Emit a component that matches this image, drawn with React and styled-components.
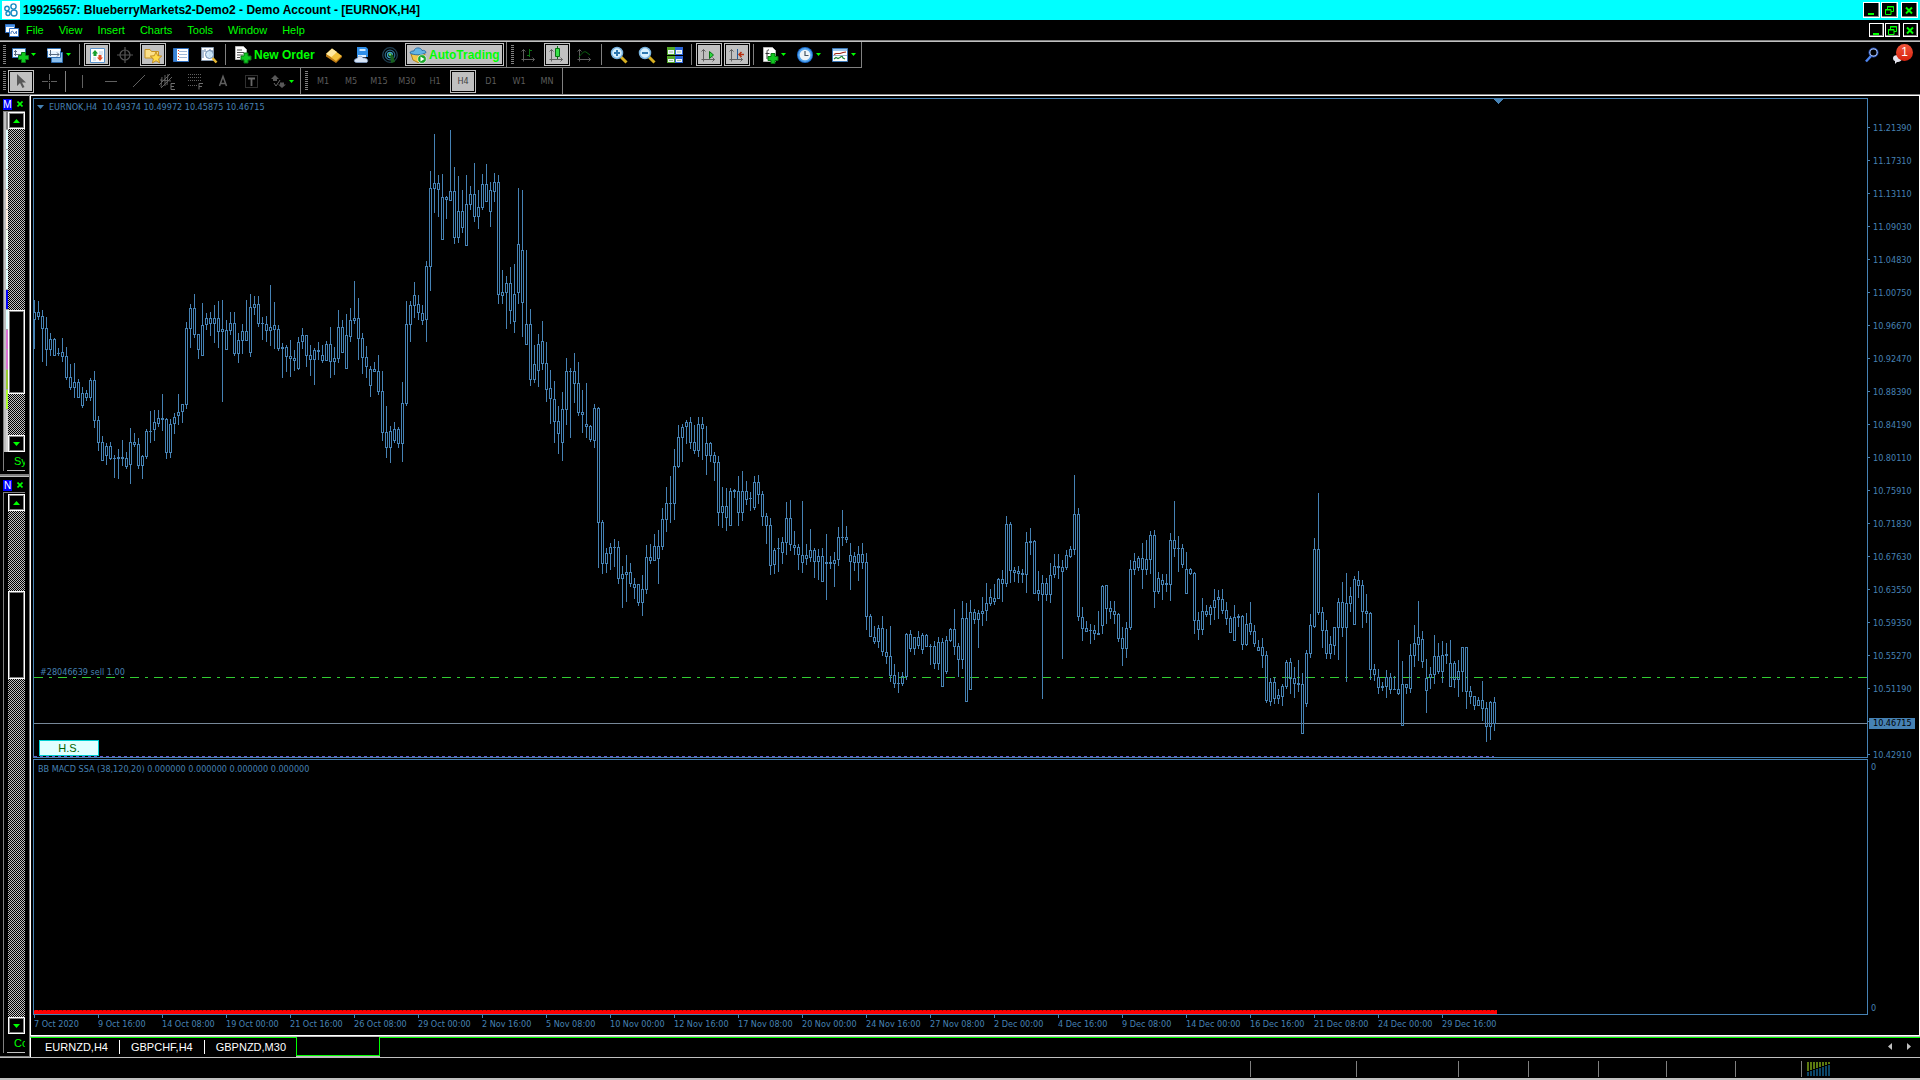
import React from 'react'
import styled, {createGlobalStyle, css} from 'styled-components'

const STEEL = '#4682b4'
const LIME = '#00ff00'
const SILVER = '#c0c0c0'

// high, body top, body bottom, low for every bar, in window rows
const BARS = `
300,312,320,349 301,312,317,320 310,316,329,362 317,328,350,366 333,339,350,356 338,339,356,356
348,353,353,356 338,352,357,362 347,356,378,380 364,377,388,390 363,382,388,398 379,382,398,398
387,393,406,408 390,393,398,401 378,380,398,401 371,380,421,428 416,420,443,451 436,442,461,461
443,446,456,465 442,446,459,460 455,458,458,478 449,457,459,479 440,457,459,466 452,458,467,469
428,442,465,484 433,442,445,447 438,444,466,469 455,456,466,479 429,431,457,459 411,431,431,443
410,422,430,441 410,418,424,427 394,418,420,431 418,419,453,459 419,424,453,458 413,417,424,434
394,412,416,425 404,404,412,423 322,328,405,409 304,308,329,348 294,308,335,338 334,334,350,359
303,325,356,356 313,318,325,330 312,318,324,336 305,318,324,343 301,318,332,348 300,329,332,402
320,330,350,350 312,323,331,335 312,323,354,356 333,340,354,363 324,331,341,354 300,331,341,341
294,307,353,357 296,304,308,315 296,304,324,327 317,323,323,340 316,324,331,342 285,327,331,346
302,325,330,349 325,329,349,351 343,347,349,378 345,347,357,372 340,356,359,377 350,358,361,371
337,342,369,370 328,335,342,349 335,335,356,367 345,355,360,376 348,350,360,385 342,350,352,360
345,355,361,363 341,344,361,361 327,344,362,378 347,358,362,375 310,327,359,363 320,327,353,353
314,335,369,369 308,320,337,342 281,318,321,324 298,318,339,360 333,338,358,374 346,357,367,378
366,369,386,397 362,369,372,372 355,371,392,395 371,391,433,441 406,432,448,458 426,431,448,463
422,429,441,443 427,429,444,448 382,403,444,462 301,324,404,406 301,305,325,342 282,295,306,318
295,304,313,320 305,313,321,325 261,266,320,342 171,188,267,291 134,183,189,213 175,183,190,217
174,197,240,240 196,197,200,219 130,191,201,201 167,191,238,244 176,211,238,243 190,211,228,233
175,204,246,246 186,194,205,210 163,194,217,222 190,207,217,229 174,184,208,210 164,184,202,202
182,190,212,227 173,182,192,202 175,182,295,304 270,292,296,304 276,283,293,329 267,283,311,324
264,294,322,333 188,244,293,304 190,250,303,337 250,324,345,345 309,324,380,386 345,364,380,383
334,344,371,387 321,341,364,370 342,363,390,402 370,388,399,424 381,399,422,443 406,421,434,454
392,409,443,461 358,371,410,425 368,371,371,438 353,371,384,403 362,383,413,416 390,412,415,433
383,424,427,438 425,426,440,442 404,408,441,448 407,408,523,568 520,522,564,574 548,553,564,573
543,547,554,570 539,547,547,567 541,547,579,584 566,574,579,608 555,572,575,602 563,572,584,587
578,584,588,599 584,584,603,606 575,589,603,616 545,557,590,594 544,557,561,564 534,546,561,561
530,546,559,584 508,519,547,550 487,503,520,532 476,503,503,523 449,466,504,520 425,437,467,468
424,427,438,462 420,422,427,444 417,422,443,449 425,442,451,454 417,424,451,457 417,424,429,460
426,443,456,475 442,443,456,462 452,455,463,481 456,462,513,526 487,506,513,528 488,506,518,531
488,491,526,526 489,490,492,498 476,491,513,526 471,491,513,521 481,491,500,505 492,498,498,511
476,482,508,510 475,482,495,504 491,494,517,526 513,516,526,544 518,525,566,575 548,550,565,574
538,548,548,572 537,542,553,564 502,518,543,555 500,518,545,551 531,545,548,555 544,547,555,570
501,555,563,573 544,555,559,565 529,550,558,562 548,550,562,578 549,556,562,580 548,556,582,582
534,562,564,600 556,562,564,569 552,560,564,587 527,537,560,566 510,537,537,546 526,537,540,543
543,555,562,590 552,556,563,571 546,554,563,581 543,554,563,569 553,562,617,630 614,616,637,637
626,637,642,644 625,628,642,648 616,628,652,656 629,652,657,664 626,656,676,682 664,675,684,688
672,683,683,693 672,676,684,686 633,634,677,680 630,634,649,652 637,637,649,655 631,637,646,649
633,635,650,654 634,635,647,647 644,646,646,665 641,646,664,669 637,642,664,670 638,642,687,687
636,640,672,674 628,629,641,642 609,629,647,655 643,646,660,677 601,618,660,669 603,618,702,702
600,612,690,690 609,612,620,624 610,613,620,648 597,611,614,626 583,603,611,621 589,597,604,606
584,598,602,605 578,579,599,599 570,579,584,602 516,524,584,587 522,524,571,583 567,570,573,582
566,571,574,583 569,573,575,583 532,542,575,593 528,541,543,555 540,541,594,594 571,590,594,601
575,583,595,699 578,583,595,601 563,575,595,603 554,566,575,578 554,566,568,579 560,567,572,659
550,555,568,570 546,549,557,558 475,514,550,555 508,514,617,621 607,617,629,641 621,628,632,632
624,630,630,644 625,630,634,640 611,633,635,635 585,586,626,634 585,585,609,624 601,608,612,619
601,611,615,624 613,614,639,642 627,638,649,666 622,628,649,658 560,569,628,630 553,561,570,575
556,558,568,571 543,558,570,589 540,559,570,575 531,535,560,574 530,535,592,608 572,578,592,594
574,580,585,600 574,583,585,592 533,540,585,601 501,540,549,557 536,548,548,572 544,548,565,568
552,569,594,594 568,569,574,575 572,573,621,634 612,620,630,640 598,611,630,635 605,611,615,617
605,607,615,625 589,600,608,620 590,597,600,619 589,599,611,614 602,610,619,625 616,618,633,633
605,617,641,641 614,616,618,627 615,616,645,650 613,624,645,646 602,623,632,635 625,631,644,647
640,647,651,651 638,647,656,668 651,655,701,703 678,682,702,706 677,682,699,704 689,695,699,704
684,686,697,706 660,662,687,689 658,662,679,694 667,678,684,698 660,683,685,692 673,684,734,734
650,653,704,707 614,625,654,658 538,549,627,628 493,549,613,615 607,612,631,648 620,630,654,659
636,644,654,659 627,627,646,655 598,602,628,660 582,602,628,637 573,603,628,682 587,596,604,612
576,579,625,625 571,580,586,598 580,585,612,628 594,611,614,623 612,613,670,680 664,669,675,681
669,677,688,694 682,686,688,691 670,677,687,698 673,677,690,694 676,689,689,690 640,689,694,695
661,684,726,726 684,684,688,694 644,655,689,693 625,643,656,667 601,637,645,661 631,639,662,668
659,678,691,713 667,674,678,689 635,656,675,684 643,656,672,674 641,655,672,683 643,654,656,664
640,663,687,687 661,663,680,688 660,671,680,697 647,647,672,692 647,647,692,709 686,691,697,704
696,696,706,710 697,700,706,706 681,700,709,721 702,708,727,742 701,702,727,740 697,702,724,731
`.trim().split(/\s+/).map(bar => bar.split(',').map(Number))

const PLOT_TOP = 99

const candlePath = BARS.map((bar, i) => {
  const [high, top, bottom, low] = bar.map(v => v - PLOT_TOP)
  const x = i * 4
  const height = bottom - 1 - top
  const body = height > 0
    ? `M${x - 0.5} ${top + 0.5}h2v${height}h-2z`
    : `M${x - 1} ${top + 0.5}h3`
  return `M${x + 0.5} ${high}V${top}M${x + 0.5} ${bottom}V${low}${body}`
}).join('')

const PRICES = [
  '11.21390', '11.17310', '11.13110', '11.09030', '11.04830', '11.00750', '10.96670',
  '10.92470', '10.88390', '10.84190', '10.80110', '10.75910', '10.71830', '10.67630',
  '10.63550', '10.59350', '10.55270', '10.51190', '', '10.42910'
]

const DATES = [
  '7 Oct 2020', '9 Oct 16:00', '14 Oct 08:00', '19 Oct 00:00', '21 Oct 16:00', '26 Oct 08:00',
  '29 Oct 00:00', '2 Nov 16:00', '5 Nov 08:00', '10 Nov 00:00', '12 Nov 16:00', '17 Nov 08:00',
  '20 Nov 00:00', '24 Nov 16:00', '27 Nov 08:00', '2 Dec 00:00', '4 Dec 16:00', '9 Dec 08:00',
  '14 Dec 00:00', '16 Dec 16:00', '21 Dec 08:00', '24 Dec 00:00', '29 Dec 16:00'
]

const GlobalStyle = createGlobalStyle`
  * {
    box-sizing: border-box;
  }
  body {
    margin: 0;
    background: #000;
    overflow: hidden;
    font-family: 'Liberation Sans', sans-serif;
    font-size: 11px;
  }
  button {
    margin: 0;
    padding: 0;
    border: 0;
    background: none;
    color: inherit;
    font: inherit;
  }
  svg {
    display: block;
    flex: none;
  }
`

const Terminal = styled.div`
  display: flex;
  flex-direction: column;
  height: 100vh;
`

const TitleBar = styled.header`
  display: flex;
  align-items: center;
  gap: 3px;
  height: 20px;
  padding: 0 2px 0 2px;
  background: #00ffff;
  color: #000;
`

const Title = styled.h1`
  flex: 1;
  margin: 0;
  font: bold 12px/20px 'Liberation Sans', sans-serif;
  white-space: nowrap;
`

const WindowButtons = styled.div`
  display: flex;
  gap: 1px;

  button:last-child {
    margin-left: 2px;
  }
`

const WindowButton = styled.button`
  display: flex;
  align-items: center;
  justify-content: center;
  width: ${p => p.$small ? 15 : 17}px;
  height: ${p => p.$small ? 14 : 16}px;
  border: 1px solid #fff;
  background: #000;
  box-shadow: inset -1px -1px 0 #808080;
`

const MenuBar = styled.nav`
  display: flex;
  align-items: center;
  height: 20px;
  padding: 0 2px 0 5px;
  color: ${LIME};
`

const Menu = styled.div`
  display: flex;
  flex: 1;
  gap: 15px;
  padding-left: 7px;
`

const Toolbars = styled.div`
  border-top: 1px solid #808080;
  box-shadow: inset 0 1px 0 ${SILVER};
`

const ToolRow = styled.div`
  display: flex;
  height: ${p => p.$last ? 26 : 27}px;
  padding-top: ${p => p.$last ? 0 : 1}px;
`

const ToolGroup = styled.div`
  display: flex;
  align-items: center;
  gap: 2px;
  padding-left: ${p => p.$first ? 3 : 4}px;
  padding-right: ${p => p.$end || 0}px;
  border-right: 1px solid #808080;
  border-bottom: ${p => p.$flat ? 0 : 1}px solid #808080;
`

const Grip = styled.span`
  width: 3px;
  height: 20px;
  background: repeating-linear-gradient(#808080 0 1px, #000 1px 2px);
`

const Divider = styled.span`
  width: 1px;
  height: 21px;
  margin: 0 2px 0 1px;
  background: #808080;
`

const pressed = css`
  border: 1px solid ${SILVER};
  background: ${SILVER};
  box-shadow: inset 0 0 0 1px #000;
`

const ToolButton = styled.button`
  display: flex;
  align-items: center;
  justify-content: center;
  width: 26px;
  height: 23px;
  ${p => p.$on && pressed}
`

const DropButton = styled.button`
  display: flex;
  align-items: center;
  gap: 1px;
  width: 33px;
  height: 23px;
  padding-left: 3px;
`

const LabelButton = styled.button`
  display: flex;
  align-items: center;
  gap: 2px;
  width: ${p => p.$on ? 99 : 89}px;
  height: 23px;
  padding-left: ${p => p.$on ? 3 : 4}px;
  color: ${LIME};
  font-weight: bold;
  font-size: 12px;
  white-space: nowrap;
  ${p => p.$on && pressed}
`

const PeriodButton = styled(ToolButton)`
  color: ${p => p.$on ? '#404040' : '#5c5c5c'};
  font-family: 'DejaVu Sans Condensed', 'DejaVu Sans', sans-serif;
  font-size: 9px;
`

const Spacer = styled.div`
  flex: 1;
`

const Alerts = styled.div`
  display: flex;
  align-items: center;
  gap: 10px;
  padding-right: 7px;
`

const AlertButton = styled.button`
  position: relative;
  width: 22px;
  height: 18px;
`

const Badge = styled.span`
  position: absolute;
  top: -2px;
  right: 0;
  width: 17px;
  height: 17px;
  border-radius: 9px;
  background: linear-gradient(#f0563c, #d8210c);
  color: #fff;
  font-size: 12px;
  line-height: 16px;
`

const Workspace = styled.main`
  display: flex;
  flex: 1;
  min-height: 0;
`

const Sidebar = styled.aside`
  display: flex;
  flex-direction: column;
  width: 29px;
`

const Panel = styled.section`
  display: flex;
  flex-direction: column;
  height: ${p => p.$height ? p.$height + 'px' : 'auto'};
  flex: ${p => p.$height ? 'none' : 1};
  padding: 2px 4px 3px 3px;
  border-top: 1px solid #808080;
  border-bottom: 1px solid #808080;
  box-shadow: inset 0 1px 0 ${SILVER};
`

const PanelHeader = styled.div`
  display: flex;
  align-items: center;
  gap: 5px;
  height: 14px;
`

const PanelTitle = styled.span`
  width: 9px;
  height: 11px;
  background: #0000ff;
  color: #fff;
  font-size: 10px;
  line-height: 11px;
  text-align: center;
`

const PanelBody = styled.div`
  display: flex;
  flex: 1;
  flex-direction: column;
  min-height: 0;
  border-top: 1px solid #808080;
  border-left: 1px solid #808080;
`

const PanelContent = styled.div`
  display: flex;
  flex: 1;
  min-height: 0;
  padding-top: ${p => p.$inset || 0}px;
`

const Symbols = styled.div`
  display: flex;
  flex-direction: column;
  width: 4px;
  border-left: ${p => p.$list ? 2 : 0}px solid ${SILVER};
  background: ${p => p.$list ? '#d3d3d3' : '#000'};
`

const SymbolRow = styled.span`
  height: 20px;
  border-bottom: 1px solid #a8a8a8;
  background: ${p => p.$color};

  &:first-child {
    height: 18px;
  }
`

const ScrollBar = styled.div`
  display: flex;
  flex: 1;
  flex-direction: column;
  background: repeating-conic-gradient(${SILVER} 0 25%, #000 0 50%) 0 0 / 2px 2px;
`

const ScrollButton = styled.button`
  display: flex;
  align-items: center;
  justify-content: center;
  height: 17px;
  border: 1px solid #fff;
  background: #000;
  box-shadow: inset 0 0 0 1px #808080;
`

const ScrollSpace = styled.span`
  flex: ${p => p.$grow} 1 0;
`

const ScrollThumb = styled.span`
  flex: ${p => p.$grow} 1 0;
  border: 1px solid #fff;
  background: #000;
  box-shadow: inset 0 0 0 1px #808080;
`

const PanelTab = styled.button`
  width: 18px;
  height: 19px;
  margin-left: 3px;
  padding-left: 7px;
  overflow: hidden;
  border-bottom: 1px solid ${SILVER};
  color: ${LIME};
  font-size: 11px;
  line-height: 18px;
  text-align: left;
  white-space: nowrap;
`

const Mdi = styled.div`
  display: flex;
  flex: 1;
  flex-direction: column;
  min-width: 0;
  border-left: 1px solid #808080;
  border-top: 1px solid #808080;
`

const Chart = styled.div`
  display: grid;
  flex: 1;
  grid-template-columns: minmax(0, 1fr) 51px;
  grid-template-rows: 660fr 1px 256fr 20px;
  min-height: 0;
  padding: 2px 0 0 2px;
  border: 1px solid #fff;
  color: ${STEEL};
  font-family: 'DejaVu Sans Condensed', 'DejaVu Sans', sans-serif;
  font-size: 9px;
`

const Pane = styled.div`
  position: relative;
  grid-column: 1;
  grid-row: ${p => p.$row};
  min-height: 0;
  overflow: hidden;
  border: 1px solid ${STEEL};
`

const Plot = styled.svg`
  width: 100%;
  height: 100%;
`

const PaneLabel = styled.div`
  position: absolute;
  top: ${p => p.$top}px;
  left: ${p => p.$left}px;
  display: flex;
  align-items: center;
  gap: 5px;
  line-height: 12px;
  white-space: pre;
`

const ScriptButton = styled.button`
  position: absolute;
  left: 5px;
  bottom: 1px;
  width: 60px;
  height: 16px;
  border: 1px solid #00ced1;
  background: #e0ffff;
  color: #006400;
  font: 11px/14px 'Liberation Sans', sans-serif;
`

const PriceAxis = styled.div`
  position: relative;
  grid-column: 2;
  grid-row: 1;
  display: flex;
  flex-direction: column;
  padding-top: 13px;
  overflow: hidden;
`

const Price = styled.span`
  display: flex;
  align-items: center;
  gap: 3px;
  height: 33px;
  flex: none;

  &::before {
    content: '';
    width: 2px;
    height: 1px;
    background: ${STEEL};
  }
`

const LastPrice = styled.span`
  position: absolute;
  top: 620px;
  left: 1px;
  width: 46px;
  height: 11px;
  padding-left: 4px;
  background: ${STEEL};
  color: #000;
  line-height: 11px;
`

const SubAxis = styled.div`
  grid-column: 2;
  grid-row: 3;
  display: flex;
  flex-direction: column;
  justify-content: space-between;
  padding: 3px 3px 1px;
  line-height: 11px;
`

const DateAxis = styled.div`
  display: flex;
  grid-column: 1 / 3;
  grid-row: 4;
  padding-left: 1px;
`

const DateMark = styled.span`
  width: 64px;
  flex: none;
  line-height: 13px;
  white-space: nowrap;

  &::before {
    content: '';
    display: block;
    width: 1px;
    height: 3px;
    background: ${STEEL};
  }
`

const ChartTabs = styled.div`
  display: flex;
  height: 21px;
  border-top: 1px solid ${SILVER};
  color: #fff;
`

const TabList = styled.div`
  display: flex;
  align-items: center;
  gap: 11px;
  padding: 0 10px 2px 14px;
  border-top: 1px solid ${LIME};
  border-left: 1px solid #fff;
`

const Tab = styled.button`
  height: 16px;
  white-space: nowrap;
`

const TabLine = styled.span`
  width: 1px;
  height: 14px;
  background: #fff;
`

const ActiveTab = styled.button`
  width: 84px;
  height: 19px;
  border: 1px solid ${LIME};
  border-top: 0;
  box-shadow: 0 1px 0 ${SILVER};
`

const TabRest = styled.div`
  display: flex;
  flex: 1;
  align-items: center;
  justify-content: flex-end;
  gap: 15px;
  padding: 0 9px 2px 0;
  border-top: 1px solid ${LIME};
`

const StatusBar = styled.footer`
  display: grid;
  grid-template-columns: 1fr 106px 102px 70px 70px 68px 69px 66px 119px;
  height: 23px;
  padding: 3px 0 1px;
  border-top: 1px solid ${SILVER};
  border-bottom: 2px solid ${SILVER};
`

const StatusCell = styled.div`
  display: flex;
  align-items: center;
  padding-left: 5px;
  border-left: ${p => p.$first ? 0 : 1}px solid #808080;
`

const Icon = ({children, size = 18}) => (
  <svg width={size} height={size} viewBox={`0 0 ${size} ${size}`} aria-hidden="true">{children}</svg>
)

const DropCaret = styled.svg`
  margin-left: 1px;
`

const Caret = () => (
  <DropCaret width="5" height="3" viewBox="0 0 5 3" aria-hidden="true"><path d="M0 0h5L2.500 3z" fill={LIME}/></DropCaret>
)

const Arrow = ({down}) => (
  <svg width="7" height="4" viewBox="0 0 7 4" aria-hidden="true"><path d={down ? 'M0 0h7L3.5 4z' : 'M0 4h7L3.5 0z'} fill={LIME}/></svg>
)

const Plus = ({x, y}) => (
  <path d={`M${x + 3} ${y}h4v3h3v4h-3v3h-4v-3h-3v-4h3z`} fill="#10c820" stroke="#067a10" strokeWidth="1"/>
)

const axes = 'M3.5 3.5v12M1.5 13.5h13M1.5 5.5l2-2 2 2M12.5 11.5l2 2-2 2'

const icons = {
  app: <Icon>
    <path d="M0 0h18v18H0z" fill="#fff"/>
    <g fill="none" stroke="#178cc4" strokeWidth="1.4"><circle cx="11.500" cy="5.500" r="2.600"/><circle cx="5" cy="7.500" r="2.200"/><circle cx="12" cy="12" r="3"/><circle cx="6" cy="12.500" r="2"/></g>
  </Icon>,
  newChart: <Icon>
    <path d="M1.500 2.500h13v9h-13z" fill="#e9f5ff" stroke="#2e6db0"/><path d="M4.500 4v6M3 8.500h9M3 5.500h3" stroke="#5a6b80" fill="none"/><Plus x={7.5} y={6.5}/>
  </Icon>,
  profiles: <Icon>
    <path d="M5.500 6.500h11v10h-11z" fill="#8cc0ee" stroke="#2e6db0"/><path d="M1.500 2.500h13v9h-13z" fill="#e9f5ff" stroke="#2e6db0"/><path d="M1.500 3h13v2h-13z" fill="#fff"/><path d="M4.500 4v6M3 8.500h10M11 6.500l2 2-2 2" stroke="#5a6b80" fill="none"/>
  </Icon>,
  market: <Icon>
    <path d="M2.500 2.500h14v14h-14z" fill="#fff" stroke="#5a93cc"/><path d="M11 6h4M11 8h4M5 12h3M5 14h3" stroke="#b4cce4"/><path d="M7 4l3 3.500H8.500V10h-3V7.500H4z" fill="#18a030"/><path d="M12 15l-3-3.500h1.500V9h3v2.500H15z" fill="#e2502a"/>
  </Icon>,
  target: <Icon>
    <g fill="none" stroke="#555" strokeWidth="1.2"><circle cx="9" cy="9" r="5"/><path d="M9 1v16M1 9h16"/></g>
  </Icon>,
  navigator: <Icon>
    <path d="M1 3.500h5l1.500 2h7V12H1z" fill="#fbe08a" stroke="#c79320"/><path d="M12 6l1.700 3.700 4 .4-3 2.700.9 4.100-3.600-2.100-3.600 2.100.9-4.100-3-2.700 4-.4z" fill="#ffdb4a" stroke="#b67c12" strokeWidth=".8"/>
  </Icon>,
  terminal: <Icon>
    <path d="M1.500 2.500h15v13h-15z" fill="#fff" stroke="#2f6fc0"/><path d="M2 3h3v12H2z" fill="#3b85d8"/><path d="M7 5.500h8M7 8.500h8M7 11.500h8" stroke="#9fb8d8"/><path d="M6.500 4v10" stroke="#e04030" strokeDasharray="1 2"/>
  </Icon>,
  tester: <Icon>
    <path d="M1.500 1.500h12v13h-12z" fill="#fff" stroke="#8798ac"/><path d="M3 4v8M5 3v3M10 3v8M12 4v5" stroke="#5b7ea8"/><circle cx="9.500" cy="8.500" r="4" fill="#cbe6f8" fillOpacity=".85" stroke="#6d8cb0"/><path d="M12.500 12l4 4.500" stroke="#e8b830" strokeWidth="2.500"/>
  </Icon>,
  order: <Icon>
    <path d="M1.500 .5h8l3 3v10h-11z" fill="#fff" stroke="#b8b8b8"/><path d="M3 4h5M3 6.500h7M3 9h6M3 11.500h3" stroke="#555"/><Plus x={7} y={7}/>
  </Icon>,
  editor: <Icon>
    <path d="M1 8l6-5.500L17 10l-6 6z" fill="#f4c23c"/><path d="M1 8l6-5.500L12 6 6.500 11z" fill="#ffe9a0"/><path d="M1 8v2.500L11 17l6-6V9.500L11 15z" fill="#c07c14"/>
  </Icon>,
  vps: <Icon>
    <path d="M4 1h9l2 2v8H4z" fill="#2f8ee8"/><path d="M6.500 3h6v2h-6z" fill="#cfeaff"/><path d="M5 9h8v2H5z" fill="#e4f2ff"/><path d="M4 16.500c-4 0-3-4 0-4 1-3 5-3 6-.5 5-1 6 4.500 3 4.500z" fill="#d8e6f8" stroke="#7e9cc8" strokeWidth=".8"/>
  </Icon>,
  signals: <Icon>
    <g fill="none" strokeWidth="1.3"><circle cx="9" cy="9" r="7.300" stroke="#1e3d50"/><circle cx="9" cy="9" r="4.800" stroke="#2a6584"/><circle cx="9" cy="9" r="2.500" stroke="#3aa0c0"/></g><path d="M9 8l3 1 2 7-4 1z" fill="#17601e"/><circle cx="9" cy="8.500" r="1.300" fill="#68d060"/>
  </Icon>,
  auto: <Icon>
    <path d="M2 8l2 6 5 2.500 5-2.500 2-6z" fill="#f2c84a" stroke="#b28418"/><path d="M1 7c0-2 3-2 4-2 .5-4 7-4 8-.5 2-.5 4 .5 4 2-4 3-12 3-16 .5z" fill="#62b4e4" stroke="#2c6fa8"/><circle cx="13" cy="13" r="4.300" fill="#18a828" stroke="#fff" strokeWidth=".6"/><path d="M11.500 10.500l4 2.500-4 2.500z" fill="#fff"/>
  </Icon>,
  bars: <Icon>
    <path d={axes} fill="none" stroke="#5e5e5e"/><path d="M9.500 3v8M7 9.500h2M10 4.500h2" stroke="#0c7414"/>
  </Icon>,
  candles: <Icon>
    <path d={axes} fill="none" stroke="#606060"/><path d="M9.500 0v13" stroke="#087014"/><path d="M7.500 2.500h4v8h-4z" fill="#38e048" stroke="#087014"/>
  </Icon>,
  line: <Icon>
    <path d={axes} fill="none" stroke="#5e5e5e"/><path d="M3 11c3-4 5-6 7-5l4 3" fill="none" stroke="#0c6412"/>
  </Icon>,
  zoomIn: <Icon>
    <path d="M11 11l5.500 5.500" stroke="#d8b020" strokeWidth="3"/><circle cx="7" cy="7" r="5.500" fill="#d6f0ff" stroke="#78b4e0" strokeWidth="1.500"/><path d="M4 7h6M7 4v6" stroke="#2e78b0" strokeWidth="2"/>
  </Icon>,
  zoomOut: <Icon>
    <path d="M11 11l5.500 5.500" stroke="#d8b020" strokeWidth="3"/><circle cx="7" cy="7" r="5.500" fill="#d6f0ff" stroke="#78b4e0" strokeWidth="1.500"/><path d="M4 7h6" stroke="#2e78b0" strokeWidth="2"/>
  </Icon>,
  tile: <Icon>
    <path d="M1 1h8v8H1zM10 10h7v7h-7z" fill="#52a828"/><path d="M9 1h8v8H9z" fill="#2c66d8"/><path d="M1 10h8v7H1z" fill="#52a828"/><path d="M9 10h8v7H9z" fill="#2c66d8"/><path d="M2 4h6v4H2zM10 4h6v4h-6zM2 13h6v3H2zM10 13h6v3h-6z" fill="#eef6ff"/><path d="M3 6h4M11 6h4M3 14.500h4M11 14.500h4" stroke="#9cbc9c"/>
  </Icon>,
  scroll: <Icon>
    <path d={axes} fill="none" stroke="#606060"/><path d="M9.500 5.500l4 3.500-4 3.500z" fill="#30d840" stroke="#087014"/>
  </Icon>,
  shift: <Icon>
    <path d={axes} fill="none" stroke="#606060"/><path d="M9.500 3v10" stroke="#205c98"/><path d="M16 8.500h-5M13.500 6l-2.500 2.500 2.500 2.500" fill="none" stroke="#b83010" strokeWidth="1.500"/>
  </Icon>,
  indicators: <Icon>
    <path d="M2.500 1.500h9l3 3v11h-12z" fill="#fff" stroke="#b8b8b8"/><path d="M8 4c-2-.5-2 1-2 3v6M4.500 7.500h4" fill="none" stroke="#333"/><Plus x={7} y={7.5}/>
  </Icon>,
  clock: <Icon>
    <circle cx="9" cy="9" r="8" fill="#1c6ed0"/><circle cx="9" cy="9" r="7" fill="#58a8f0"/><circle cx="9" cy="9" r="5.300" fill="#eef4f8"/><path d="M9 5v4.500h3.500" fill="none" stroke="#4a5866" strokeWidth="1.200"/>
  </Icon>,
  templates: <Icon>
    <path d="M1.500 2.500h15v13h-15z" fill="#fff" stroke="#3c78b8"/><path d="M2 3h14v2H2z" fill="#9cc8f0"/><path d="M3 8.500l2-1h4l3-1 3-.5" fill="none" stroke="#a02818" strokeWidth="1.200"/><path d="M3 13l2-1.500 2 1 2-1 2-1.500 1 2 2 1" fill="none" stroke="#208838" strokeWidth="1.200"/><path d="M2 9.500h14" stroke="#9cb4cc"/>
  </Icon>,
  cursor: <Icon><path d="M5 2v12l3-3 2.500 5 2-1-2.500-4.500h4z" fill="#585858"/></Icon>,
  cross: <Icon><path d="M9.500 2v6M9.500 11v6M2 9.500h6M11 9.500h6M9 9.500h1" stroke="#606060"/></Icon>,
  vline: <Icon><path d="M8.500 3v13" stroke="#606060"/></Icon>,
  hline: <Icon><path d="M3 9.500h12" stroke="#606060"/></Icon>,
  trend: <Icon><path d="M3 15L15 3" stroke="#606060"/></Icon>,
  channel: <Icon>
    <path d="M1 13L12 2M3 16L14 5M2 8l11 1M4 5l-1 10M7 3v11M10 2L9 13" stroke="#606060" fill="none"/><path d="M17 11.500h-4v6h4M13 14.500h3" stroke="#707070" fill="none"/>
  </Icon>,
  fibo: <Icon>
    <path d="M2 2.500h14M2 5.500h14M2 8.500h14M2 13.500h9" stroke="#606060" strokeDasharray="1 1"/><path d="M17 11.500h-4v6M13 14.500h3" stroke="#707070" fill="none"/>
  </Icon>,
  text: <Icon><path d="M5.500 14L9 4.500l3.500 9.500M6.500 11.500h5" fill="none" stroke="#606060" strokeWidth="1.500"/></Icon>,
  label: <Icon>
    <path d="M3.500 3.500h12v12h-12z" fill="none" stroke="#606060" strokeDasharray="1 1"/><path d="M6 6.500h7M9.500 6v8" stroke="#686868" strokeWidth="1.800"/>
  </Icon>,
  arrows: <Icon>
    <path d="M6 3l4 4H8v2H4V7H2zM13 16l-4-3.500h2V10.500h4v2h2z" fill="#585858"/><path d="M5 11l2 3 4-6" fill="none" stroke="#686868"/>
  </Icon>,
  search: <Icon>
    <path d="M3 15.500L8 10" stroke="#4c84f0" strokeWidth="2.500"/><circle cx="10.500" cy="6.500" r="3.800" fill="#000" stroke="#a0bcf8" strokeWidth="1.500"/><circle cx="10.500" cy="6.500" r="4.600" fill="none" stroke="#2450c0" strokeWidth=".8"/>
  </Icon>,
  mdi: <Icon size={14}>
    <path d="M.5 1.500h9v8h-9z" fill="#fff" stroke="#2f6fc0"/><path d="M1 2h9v2H1z" fill="#4c94e8"/><path d="M4.500 5.500h9v8h-9z" fill="#fff" stroke="#2f6fc0"/><path d="M6 11V9l1.500-1 2 3 2-3v3" fill="none" stroke="#5080c0"/>
  </Icon>
}

const glyphs = {
  Minimize: <path d="M2 8h6v2H2z" fill={LIME}/>,
  Restore: <path d="M3.500 4V1.500h6v5H7M3 2h7M1.500 4.500h5.500v5H1.500zM1 5h6" fill="none" stroke={LIME}/>,
  Close: <path d="M2 2.500l6 6M8 2.500l-6 6" stroke={LIME} strokeWidth="2"/>
}

const Controls = ({small, target}) => (
  <WindowButtons>
    {Object.keys(glyphs).map(name => (
      <WindowButton key={name} $small={small} aria-label={`${name} ${target}`}>
        <Icon size={11}>{glyphs[name]}</Icon>
      </WindowButton>
    ))}
  </WindowButtons>
)

const Tool = ({icon, on}) => (
  <ToolButton $on={on} aria-pressed={!!on} aria-label={icon}>{icons[icon]}</ToolButton>
)

const Drop = ({icon}) => (
  <DropButton aria-label={icon}>{icons[icon]}<Caret/></DropButton>
)

const SidePanel = ({letter, name, tab, height, inset, before, thumb, after, rows}) => (
  <Panel $height={height} aria-label={name}>
    <PanelHeader>
      <PanelTitle>{letter}</PanelTitle>
      <button aria-label={`Close ${name}`}>
        <svg width="6" height="6" viewBox="0 0 6 6"><path d="M.5 .5l5 5M5.500 .5l-5 5" stroke={LIME} strokeWidth="1.600"/></svg>
      </button>
    </PanelHeader>
    <PanelBody>
      <PanelContent $inset={inset}>
        <Symbols $list={!!rows}>
          {rows && rows.map((color, i) => <SymbolRow key={i} $color={color}/>)}
        </Symbols>
        <ScrollBar>
          <ScrollButton aria-label={`Scroll ${name} up`}><Arrow/></ScrollButton>
          <ScrollSpace $grow={before}/>
          <ScrollThumb $grow={thumb}/>
          <ScrollSpace $grow={after}/>
          <ScrollButton aria-label={`Scroll ${name} down`}><Arrow down/></ScrollButton>
        </ScrollBar>
      </PanelContent>
      <PanelTab>{tab}</PanelTab>
    </PanelBody>
  </Panel>
)

const WATCH_ROWS = [
  '#808080', '#e0ffff', '#e0ffff', '#e0ffff', '#ffefe0', '#ffefe0', '#f0fff0', '#e0ffff', '#e0ffff',
  '#0000ff', '#e0ffff', '#da70d6', '#da70d6', '#9acd32', '#adff2f'
]

const PERIODS = ['M1', 'M5', 'M15', 'M30', 'H1', 'H4', 'D1', 'W1', 'MN']

const SignalMeter = () => (
  <svg width="24" height="14" viewBox="0 0 24 14" aria-hidden="true">
    {[0, 1, 2, 3, 4, 5, 6, 7].map(i => (
      <React.Fragment key={i}>
        <path d={`M${i * 3} 0h2v${9 - i}h-2z`} fill="#5c7a10"/>
        <path d={`M${i * 3} ${10 - i}h2V14h-2z`} fill="#0c4668"/>
      </React.Fragment>
    ))}
  </svg>
)

export default function App () {
  return <Terminal>
    <GlobalStyle/>
    <TitleBar>
      {icons.app}
      <Title>19925657: BlueberryMarkets2-Demo2 - Demo Account - [EURNOK,H4]</Title>
      <Controls target="terminal"/>
    </TitleBar>
    <MenuBar>
      {icons.mdi}
      <Menu>
        {['File', 'View', 'Insert', 'Charts', 'Tools', 'Window', 'Help'].map(m => <button key={m}>{m}</button>)}
      </Menu>
      <Controls small target="chart"/>
    </MenuBar>

    <Toolbars>
      <ToolRow>
        <ToolGroup $first $end={2}>
          <Grip/>
          <Drop icon="newChart"/>
          <Drop icon="profiles"/>
          <Divider/>
          <Tool icon="market" on/>
          <Tool icon="target"/>
          <Tool icon="navigator" on/>
          <Tool icon="terminal"/>
          <Tool icon="tester"/>
          <Divider/>
          <LabelButton>{icons.order}New Order</LabelButton>
          <Tool icon="editor"/>
          <Tool icon="vps"/>
          <Tool icon="signals"/>
          <LabelButton $on aria-pressed="true">{icons.auto}AutoTrading</LabelButton>
        </ToolGroup>
        <ToolGroup>
          <Grip/>
          <Tool icon="bars"/>
          <Tool icon="candles" on/>
          <Tool icon="line"/>
          <Divider/>
          <Tool icon="zoomIn"/>
          <Tool icon="zoomOut"/>
          <Tool icon="tile"/>
          <Divider/>
          <Tool icon="scroll" on/>
          <Tool icon="shift" on/>
          <Divider/>
          <Drop icon="indicators"/>
          <Drop icon="clock"/>
          <Drop icon="templates"/>
        </ToolGroup>
        <Spacer/>
        <Alerts>
          <button aria-label="Search">{icons.search}</button>
          <AlertButton aria-label="Notifications">
            <Icon><path d="M2 12c0-4 9-4 9 0s-4 4-5 4l-2 2v-3c-1 0-2-1-2-3z" fill="#e4e4ee"/></Icon>
            <Badge>1</Badge>
          </AlertButton>
        </Alerts>
      </ToolRow>
      <ToolRow $last>
        <ToolGroup $first $flat $end={1}>
          <Grip/>
          <Tool icon="cursor" on/>
          <Tool icon="cross"/>
          <Divider/>
          <Tool icon="vline"/>
          <Tool icon="hline"/>
          <Tool icon="trend"/>
          <Tool icon="channel"/>
          <Tool icon="fibo"/>
          <Tool icon="text"/>
          <Tool icon="label"/>
          <Drop icon="arrows"/>
        </ToolGroup>
        <ToolGroup $flat $end={2}>
          <Grip/>
          {PERIODS.map(p => <PeriodButton key={p} $on={p === 'H4'}>{p}</PeriodButton>)}
        </ToolGroup>
      </ToolRow>
    </Toolbars>

    <Workspace>
      <Sidebar>
        <SidePanel
          letter="M" name="Market Watch" tab="Sy" height={381}
          before={182} thumb={83} after={41} rows={WATCH_ROWS}/>
        <SidePanel
          letter="N" name="Navigator" tab="Co" inset={1}
          before={80} thumb={86} after={339}/>
      </Sidebar>

      <Mdi>
        <Chart>
          <Pane $row={1}>
            <Plot shapeRendering="crispEdges" role="img" aria-label="EURNOK H4 candles">
              <path d="M0 578.500h4000" stroke="#32cd32" strokeDasharray="9 6 3 6"/>
              <path d="M0 624.500h4000" stroke="#778899"/>
              <path d="M0 657.500h1460" stroke="#6a5acd" strokeDasharray="3 3"/>
              <path d={candlePath} fill="none" stroke={STEEL}/>
              <path d="M1459 0h10l-5 5z" fill={STEEL}/>
            </Plot>
            <PaneLabel $top={2} $left={3}>
              <svg width="7" height="4" viewBox="0 0 7 4"><path d="M0 0h7L3.500 4z" fill={STEEL}/></svg>
              {'EURNOK,H4  10.49374 10.49972 10.45875 10.46715'}
            </PaneLabel>
            <PaneLabel $top={567} $left={6}>#28046639 sell 1.00</PaneLabel>
            <ScriptButton>H.S.</ScriptButton>
          </Pane>
          <PriceAxis>
            {PRICES.map((p, i) => <Price key={i}>{p}</Price>)}
            <LastPrice>10.46715</LastPrice>
          </PriceAxis>
          <Pane $row={3}>
            <Plot shapeRendering="crispEdges">
              <path d="M0 250h1463v4H0z" fill="#ff0000"/>
              <path d="M0 250.500h1463" stroke="#900" strokeDasharray="1 3"/>
            </Plot>
            <PaneLabel $top={3} $left={4}>BB MACD SSA (38,120,20) 0.000000 0.000000 0.000000 0.000000</PaneLabel>
          </Pane>
          <SubAxis><span>0</span><span>0</span></SubAxis>
          <DateAxis>
            {DATES.map(d => <DateMark key={d}>{d}</DateMark>)}
          </DateAxis>
        </Chart>
        <ChartTabs>
          <TabList>
            <Tab>EURNZD,H4</Tab>
            <TabLine/>
            <Tab>GBPCHF,H4</Tab>
            <TabLine/>
            <Tab>GBPNZD,M30</Tab>
          </TabList>
          <ActiveTab aria-label="EURNOK,H4"/>
          <TabRest>
            <button aria-label="Previous tabs"><svg width="4" height="7" viewBox="0 0 4 7"><path d="M4 0v7L0 3.500z" fill={SILVER}/></svg></button>
            <button aria-label="Next tabs"><svg width="4" height="7" viewBox="0 0 4 7"><path d="M0 0v7l4-3.500z" fill={SILVER}/></svg></button>
          </TabRest>
        </ChartTabs>
      </Mdi>
    </Workspace>

    <StatusBar>
      <StatusCell $first/>
      {[1, 2, 3, 4, 5, 6, 7].map(n => <StatusCell key={n}/>)}
      <StatusCell><SignalMeter/></StatusCell>
    </StatusBar>
  </Terminal>
}
